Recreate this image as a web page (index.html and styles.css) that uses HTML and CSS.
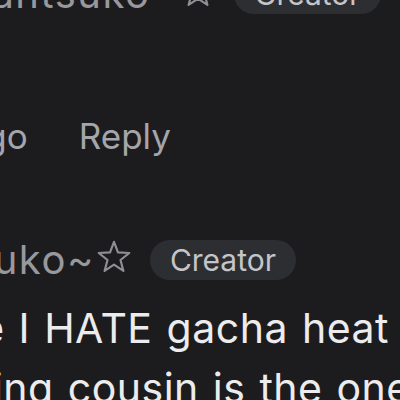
FILE: index.html
```html
<!DOCTYPE html>
<html lang="en">
<head>
<meta charset="utf-8">
<title>Comments</title>
<link rel="stylesheet" href="styles.css">
</head>
<body>
<div class="thread">
  <div class="comment comment--first">
    <div class="header">
      <span class="name">Hayantsuko</span>
      <svg class="star star--spaced" viewBox="-1 -1 36 35" width="34" height="33"><path d="M17 1 L21.2 12.2 L33.2 12.8 L23.9 20.2 L27 31.8 L17 25.2 L7 31.8 L10.1 20.2 L0.8 12.8 L12.8 12.2 Z" fill="none" stroke="currentColor" stroke-width="2.3" stroke-linejoin="round"/></svg>
      <span class="badge">Creator</span>
    </div>
    <p class="body">lol</p>
    <div class="meta">
      <span class="time">2d ago</span>
      <span class="reply">Reply</span>
    </div>
  </div>
  <div class="comment comment--second">
    <div class="header">
      <span class="name">Yantsuko~</span>
      <svg class="star" viewBox="-1 -1 36 35" width="34" height="33"><path d="M17 1 L21.2 12.2 L33.2 12.8 L23.9 20.2 L27 31.8 L17 25.2 L7 31.8 L10.1 20.2 L0.8 12.8 L12.8 12.2 Z" fill="none" stroke="currentColor" stroke-width="2.3" stroke-linejoin="round"/></svg>
      <span class="badge">Creator</span>
    </div>
    <p class="body">Relate I HATE gacha heat<br>cheating cousin is the one who plays it</p>
  </div>
</div>
</body>
</html>
```
FILE: styles.css
```css
html, body {
  margin: 0;
  padding: 0;
  background: #1c1c1f;
  width: 400px;
  height: 400px;
  overflow: hidden;
}

body {
  font-family: Inter, "Noto Sans", sans-serif;
}

.thread {
  display: flex;
  flex-direction: column;
  white-space: nowrap;
}

.comment--first {
  margin-top: -26px;
  margin-left: -87px;
}

.comment--second {
  margin-top: 84px;
  margin-left: -118px;
}

.header {
  display: flex;
  align-items: center;
  height: 40px;
}

.name {
  font-size: 40px;
  line-height: 40px;
  letter-spacing: 1.5px;
  color: #98989d;
}

.star {
  color: #8e8e93;
  margin-left: 2px;
  margin-bottom: 8px;
  flex: none;
}

.star--spaced {
  margin-left: 31px;
}

.badge {
  margin-left: 19px;
  height: 40px;
  padding: 0 20px;
  border-radius: 20px;
  background: #2d2e32;
  color: #c5c5c9;
  font-size: 30px;
  line-height: 40px;
}

.body {
  margin: 18px 0 0;
  font-size: 41px;
  line-height: 60px;
  letter-spacing: 0.5px;
  word-spacing: 2px;
  color: #ececee;
}

.meta {
  display: flex;
  gap: 51px;
  margin-top: 24px;
  font-size: 35px;
  line-height: 40px;
  color: #a5a5aa;
}
```
